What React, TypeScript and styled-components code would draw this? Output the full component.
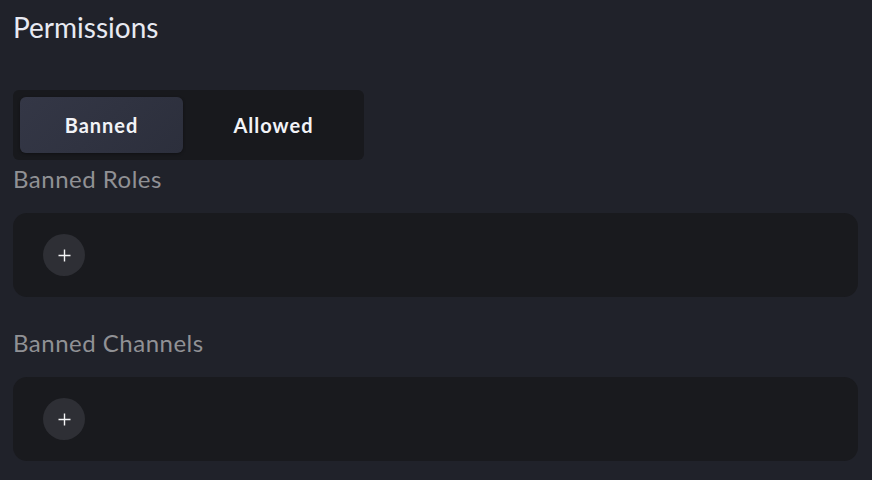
import styled, { createGlobalStyle } from "styled-components";

const GlobalStyle = createGlobalStyle`
    html, body {
        margin: 0;
        padding: 0;
        background-color: #20222a;
        font-family: "Lato", "Liberation Sans", sans-serif;
    }
`;

const Page = styled.main`
    width: 872px;
    height: 480px;
    box-sizing: border-box;
    padding: 7px 14px 0 13px;
    background-color: #20222a;
    display: flex;
    flex-direction: column;
    overflow: hidden;
`;

const Title = styled.h1`
    margin: 0;
    font-size: 28px;
    line-height: 40px;
    font-weight: 400;
    color: #e8eaf2;
`;

const Toggle = styled.div`
    margin-top: 43px;
    width: 351px;
    height: 70px;
    box-sizing: border-box;
    padding: 7px;
    gap: 7px;
    display: flex;
    background-color: #18191d;
    border-radius: 6px;
`;

const Tab = styled.button<{ $active?: boolean }>`
    flex: ${(p) => (p.$active ? "0 0 163px" : "1")};
    border: none;
    border-radius: 6px;
    font-family: inherit;
    font-size: 20px;
    font-weight: 700;
    letter-spacing: 1px;
    color: #f2f3f7;
    cursor: pointer;
    background: ${(p) =>
        p.$active ? "linear-gradient(135deg, #343746 0%, #2c2f3c 100%)" : "transparent"};
    box-shadow: ${(p) => (p.$active ? "0 1px 3px rgba(0,0,0,0.35)" : "none")};
`;

const Section = styled.section`
    display: flex;
    flex-direction: column;
`;

const Label = styled.h2<{ $gap?: number }>`
    margin: ${(p) => p.$gap ?? 0}px 0 20px 0;
    font-size: 24px;
    line-height: 28px;
    letter-spacing: 0.5px;
    font-weight: 400;
    color: #909195;
`;

const Card = styled.div`
    height: 84px;
    box-sizing: border-box;
    padding: 0 30px;
    display: flex;
    align-items: center;
    background-color: #191a1e;
    border-radius: 14px;
`;

const AddButton = styled.button`
    width: 42px;
    height: 42px;
    border-radius: 50%;
    border: none;
    padding: 0;
    background-color: #2e2f35;
    display: flex;
    align-items: center;
    justify-content: center;
    cursor: pointer;
`;

function PlusIcon() {
    return (
        <svg width="13" height="13" viewBox="0 0 13 13">
            <path d="M6.5 0.5v12M0.5 6.5h12" stroke="#f4f4f6" strokeWidth="1.4" />
        </svg>
    );
}

export default function App() {
    return (
        <>
            <GlobalStyle />
            <Page>
                <Title>Permissions</Title>
                <Toggle>
                    <Tab $active>Banned</Tab>
                    <Tab>Allowed</Tab>
                </Toggle>
                <Section>
                    <Label $gap={5}>Banned Roles</Label>
                    <Card>
                        <AddButton aria-label="Add role">
                            <PlusIcon />
                        </AddButton>
                    </Card>
                </Section>
                <Section>
                    <Label $gap={32}>Banned Channels</Label>
                    <Card>
                        <AddButton aria-label="Add channel">
                            <PlusIcon />
                        </AddButton>
                    </Card>
                </Section>
            </Page>
        </>
    );
}
